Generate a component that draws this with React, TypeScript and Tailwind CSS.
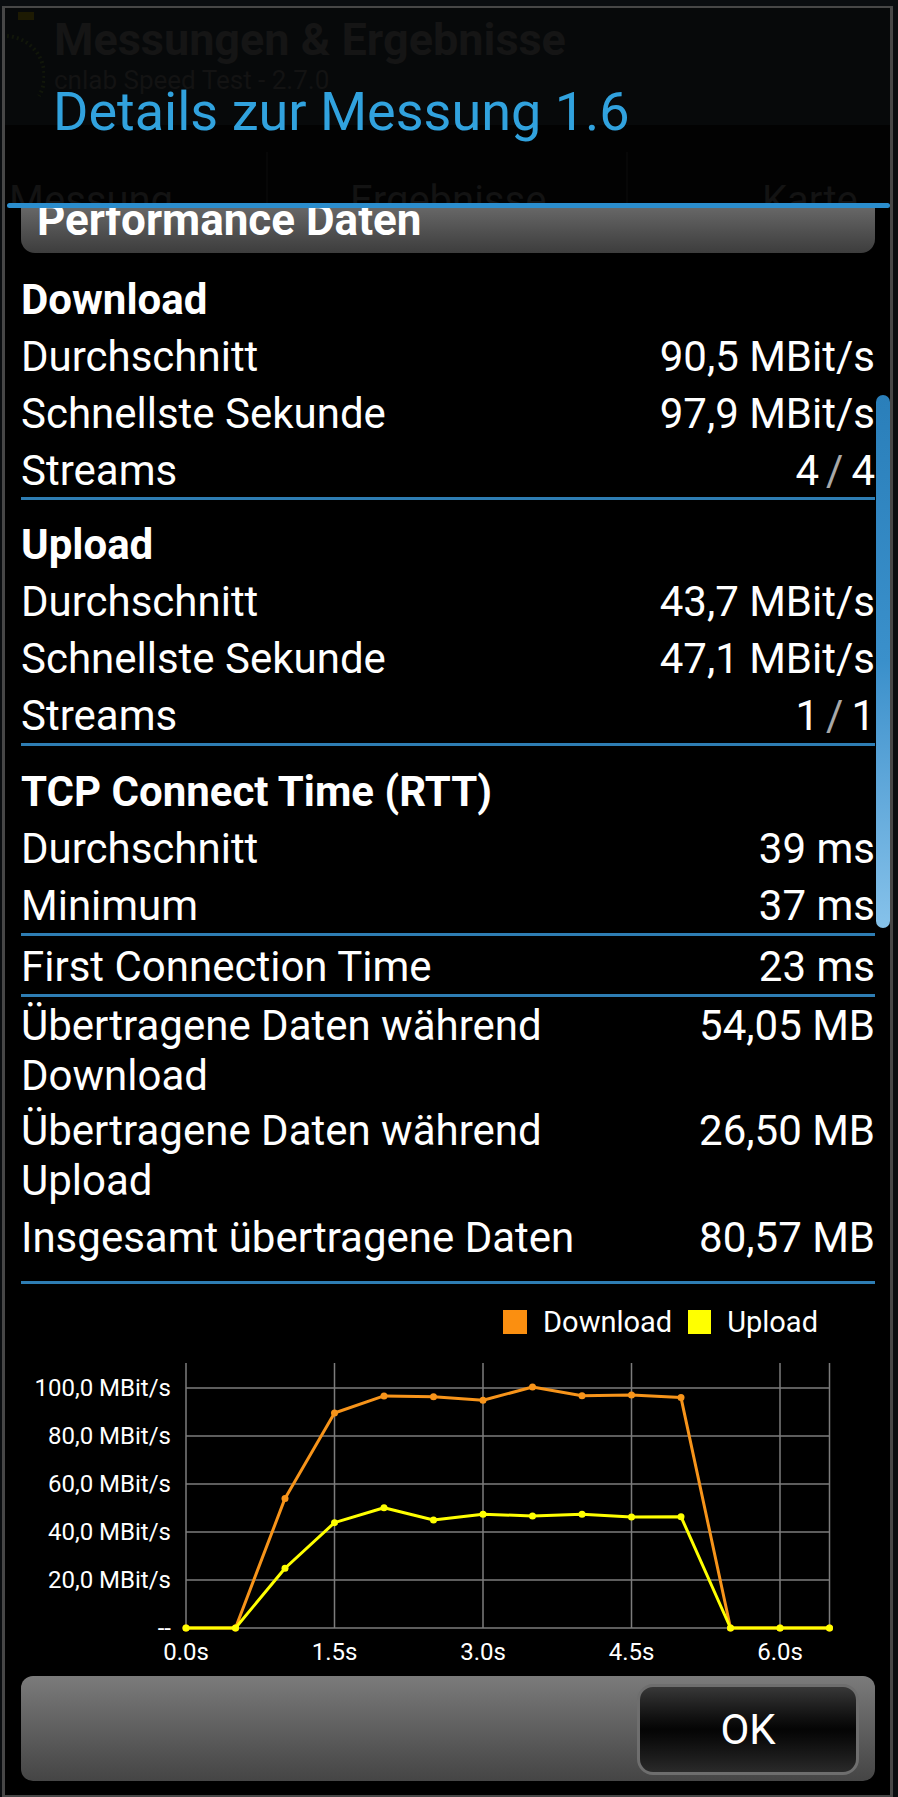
import React from "react";

const dl = [0, 0, 54, 89.6, 96.7, 96.4, 94.9, 100.4, 96.8, 97.1, 96, 0, 0, 0];
const ul = [0, 0, 24.9, 43.9, 50.1, 45, 47.4, 46.7, 47.4, 46.25, 46.4, 0, 0, 0];
const px = (i: number) => 165 + 49.5 * i;
const py = (v: number) => 287 - v * 2.4;

function Row({ label, value, bold }: { label: React.ReactNode; value?: React.ReactNode; bold?: boolean }) {
  return (
    <div className="flex items-start justify-between gap-4 leading-[50px]">
      <div className={bold ? "font-bold text-[42px]" : "text-[42px]"}>{label}</div>
      {value !== undefined && <div className="shrink-0 text-right text-[42px]">{value}</div>}
    </div>
  );
}

function Ratio({ a, b }: { a: string; b: string }) {
  return (
    <span className="inline-flex">
      <span>{a}</span>
      <span className="ml-[7px] mr-[8px] text-[#a8a8a8]">/</span>
      <span>{b}</span>
    </span>
  );
}

function Line({ className }: { className: string }) {
  return <div className={"h-[3px] bg-[#2e7db3] " + className} />;
}

function Chart() {
  const gridY = [287, 239, 191, 143, 95, 47];
  const yLabels = ["--", "20,0 MBit/s", "40,0 MBit/s", "60,0 MBit/s", "80,0 MBit/s", "100,0 MBit/s"];
  const gridX = [165, 313.5, 462, 610.5, 759, 808.5];
  const xLabels = ["0.0s", "1.5s", "3.0s", "4.5s", "6.0s"];
  const dPts = dl.map((v, i) => `${px(i)},${py(v)}`).join(" ");
  const uPts = ul.map((v, i) => `${px(i)},${py(v)}`).join(" ");
  return (
    <svg width="854" height="328" viewBox="0 0 854 328" className="mt-[7px] block">
      {gridY.map((y) => (
        <line key={"h" + y} x1={165} x2={808.5} y1={y} y2={y} stroke="#7c7c7c" strokeWidth={1.5} />
      ))}
      {gridX.map((x) => (
        <line key={"v" + x} x1={x} x2={x} y1={22} y2={287} stroke="#7c7c7c" strokeWidth={1.5} />
      ))}
      {gridY.map((y, i) => (
        <text key={"yl" + y} x={150} y={y + 8} textAnchor="end" fontSize={24} fill="#ffffff" fontFamily="Roboto, 'Liberation Sans', sans-serif">
          {yLabels[i]}
        </text>
      ))}
      {xLabels.map((t, i) => (
        <text key={t} x={gridX[i]} y={319} textAnchor="middle" fontSize={24} fill="#ffffff" fontFamily="Roboto, 'Liberation Sans', sans-serif">
          {t}
        </text>
      ))}
      <polyline points={dPts} fill="none" stroke="#f7941a" strokeWidth={3} strokeLinejoin="round" />
      {dl.map((v, i) => (
        <circle key={"dc" + i} cx={px(i)} cy={py(v)} r={3.5} fill="#f7941a" />
      ))}
      <polyline points={uPts} fill="none" stroke="#ffff00" strokeWidth={3} strokeLinejoin="round" />
      {ul.map((v, i) => (
        <circle key={"uc" + i} cx={px(i)} cy={py(v)} r={3.5} fill="#ffff00" />
      ))}
    </svg>
  );
}

export default function App() {
  return (
    <div className="w-[898px] h-[1797px] overflow-hidden bg-[#0a0d10] pt-[6px] pl-[2px] pr-[5px] font-['Roboto','Liberation_Sans',sans-serif] text-white">
      <div className="flex h-[1791px] flex-col border-x-[3px] border-y-[2px] border-[#474747] bg-black">
        {/* Title region with dimmed activity behind */}
        <div className="relative h-[195px] shrink-0 overflow-hidden bg-[#020202]">
          <div className="absolute inset-x-0 top-0 h-[117px] bg-[#07090a]" />
          <svg className="absolute left-0 top-0" width="40" height="100" viewBox="0 0 40 100">
            <rect x="13" y="4" width="16" height="8" fill="#1d1a03" />
            <path d="M2 28 A 40 40 0 0 1 34 88" fill="none" stroke="#11160a" strokeWidth="4" strokeDasharray="2 3" />
          </svg>
          <div className="absolute left-[49px] top-[6px] text-[45px] font-bold leading-[52px] text-[#151515]">
            Messungen &amp; Ergebnisse
          </div>
          <div className="absolute left-[49px] top-[57px] text-[26px] leading-[30px] text-[#131313]">
            cnlab Speed Test - 2.7.0
          </div>
          <div className="absolute left-[261px] top-[144px] h-[51px] w-[2px] bg-[#070707]" />
          <div className="absolute left-[621px] top-[144px] h-[51px] w-[2px] bg-[#070707]" />
          <div className="absolute left-[4px] top-[168px] text-[40px] leading-[50px] text-[#131313]">Messung</div>
          <div className="absolute left-[345px] top-[168px] text-[40px] leading-[50px] text-[#131313]">Ergebnisse</div>
          <div className="absolute left-[757px] top-[168px] text-[40px] leading-[50px] text-[#131313]">Karte</div>
          <div className="relative pl-[48px] pt-[73px] text-[54px] leading-[62px] text-[#31a2de]">
            Details zur Messung 1.6
          </div>
        </div>

        <div className="ml-[2px] h-[5px] shrink-0 rounded-full bg-[#2b8dcd]" />

        {/* Scrolling content */}
        <div className="relative h-[1468px] shrink-0 overflow-hidden pl-[16px] pr-[15px]">
          <div className="-mt-[20px] h-[65px] rounded-[14px] bg-gradient-to-b from-[#7a7a7a] to-[#3d3d3d] pl-[16px] text-[44px] font-bold leading-[65px]">
            Performance Daten
          </div>

          <div className="mt-[22px] flex flex-col gap-[7px]">
            <Row bold label="Download" />
            <Row label="Durchschnitt" value="90,5 MBit/s" />
            <Row label="Schnellste Sekunde" value="97,9 MBit/s" />
            <Row label="Streams" value={<Ratio a="4" b="4" />} />
          </div>
          <Line className="mt-[1px]" />

          <div className="mt-[20px] flex flex-col gap-[7px]">
            <Row bold label="Upload" />
            <Row label="Durchschnitt" value="43,7 MBit/s" />
            <Row label="Schnellste Sekunde" value="47,1 MBit/s" />
            <Row label="Streams" value={<Ratio a="1" b="1" />} />
          </div>
          <Line className="mt-[2px]" />

          <div className="mt-[21px] flex flex-col gap-[7px]">
            <Row bold label="TCP Connect Time (RTT)" />
            <Row label="Durchschnitt" value="39 ms" />
            <Row label="Minimum" value="37 ms" />
          </div>
          <Line className="mt-[2px]" />

          <div className="mt-[6px]">
            <Row label="First Connection Time" value="23 ms" />
          </div>
          <Line className="mt-[2px]" />

          <div className="mt-[4px]">
            <Row label="Übertragene Daten während Download" value="54,05 MB" />
          </div>
          <div className="mt-[5px]">
            <Row label="Übertragene Daten während Upload" value="26,50 MB" />
          </div>
          <div className="mt-[7px]">
            <Row label="Insgesamt übertragene Daten" value="80,57 MB" />
          </div>
          <Line className="mt-[18px]" />

          <div className="mt-[26px] flex items-center justify-end gap-[16px] pr-[57px] text-[29px] leading-[24px]">
            <div className="h-[24px] w-[24px] bg-[#fb8f10]" />
            <div>Download</div>
            <div className="h-[24px] w-[23px] bg-[#ffff00]" />
            <div>Upload</div>
          </div>

          <Chart />

          <div className="absolute right-0 top-[187px] h-[533px] w-[14px] rounded-full bg-gradient-to-b from-[#2a7fba] via-[#3a90cb] to-[#86c2ea]" />
        </div>

        {/* Button bar */}
        <div className="ml-[16px] mr-[15px] flex h-[105px] shrink-0 justify-end rounded-[12px] bg-gradient-to-b from-[#7b7b7b] to-[#454545] pb-[6px] pr-[16px] pt-[8px]">
          <div className="flex h-[91px] w-[222px] items-center justify-center rounded-[16px] border-[3px] border-[#6e6e6e] bg-gradient-to-b from-[#383838] via-[#050505] to-[#2a2a2a] text-[42px] leading-none">
            OK
          </div>
        </div>
      </div>
    </div>
  );
}
